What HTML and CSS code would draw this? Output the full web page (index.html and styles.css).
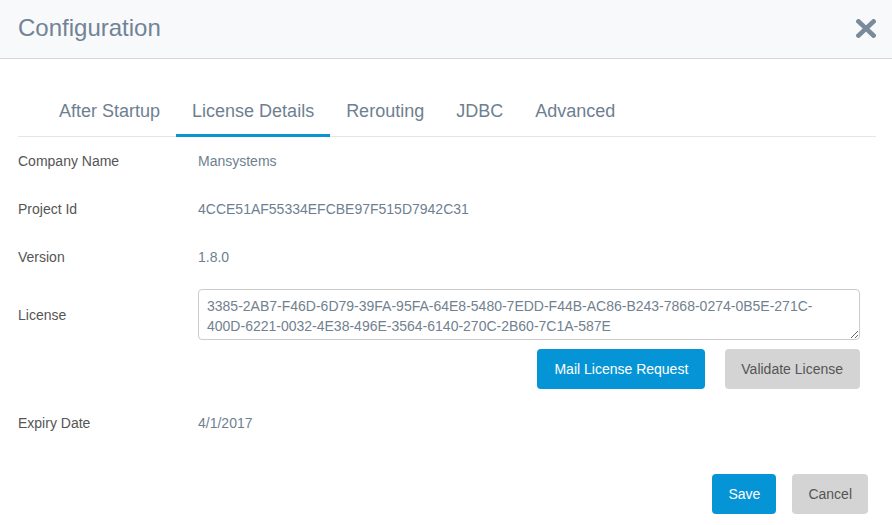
FILE: index.html
```
<!DOCTYPE html>
<html>
<head>
<meta charset="utf-8">
<link rel="stylesheet" href="styles.css">
</head>
<body>
<div class="modal">
  <header class="modal-header">
    <h1 class="title">Configuration</h1>
    <button class="close" aria-label="Close">
      <svg width="20" height="19" viewBox="0 0 20 19"><path d="M2.5 2.5 L17.5 16.5 M17.5 2.5 L2.5 16.5" stroke="#7b8a9b" stroke-width="4.6" stroke-linecap="square" fill="none"/></svg>
    </button>
  </header>
  <div class="modal-body">
    <ul class="tabs">
      <li><a class="tab">After Startup</a></li>
      <li><a class="tab active">License Details</a></li>
      <li><a class="tab">Rerouting</a></li>
      <li><a class="tab">JDBC</a></li>
      <li><a class="tab">Advanced</a></li>
    </ul>
    <div class="form">
      <div class="row">
        <div class="label">Company Name</div>
        <div class="value">Mansystems</div>
      </div>
      <div class="row">
        <div class="label">Project Id</div>
        <div class="value">4CCE51AF55334EFCBE97F515D7942C31</div>
      </div>
      <div class="row">
        <div class="label">Version</div>
        <div class="value">1.8.0</div>
      </div>
      <div class="row license-row">
        <div class="label license-label">License</div>
        <div class="field">
          <textarea class="license-text">3385-2AB7-F46D-6D79-39FA-95FA-64E8-5480-7EDD-F44B-AC86-B243-7868-0274-0B5E-271C-
400D-6221-0032-4E38-496E-3564-6140-270C-2B60-7C1A-587E</textarea>
          <div class="actions">
            <button class="btn btn-primary btn-mail">Mail License Request</button>
            <button class="btn btn-default btn-validate">Validate License</button>
          </div>
        </div>
      </div>
      <div class="row">
        <div class="label">Expiry Date</div>
        <div class="value">4/1/2017</div>
      </div>
    </div>
  </div>
  <footer class="modal-footer">
    <button class="btn btn-primary">Save</button>
    <button class="btn btn-default">Cancel</button>
  </footer>
</div>
</body>
</html>
```
FILE: styles.css
```
* { box-sizing: border-box; }
html, body {
  margin: 0;
  padding: 0;
  background: #ffffff;
  font-family: "Liberation Sans", Arial, sans-serif;
}
.modal {
  width: 892px;
  height: 525px;
  overflow: hidden;
  background: #ffffff;
}
.modal-header {
  height: 59px;
  background: #f8f9fb;
  border-bottom: 1px solid #d5d7db;
  display: flex;
  align-items: center;
  justify-content: space-between;
  padding: 0 16px 2px 18px;
}
.title {
  margin: 0;
  font-size: 24px;
  font-weight: normal;
  line-height: 28px;
  color: #728396;
}
.close {
  border: none;
  background: none;
  padding: 0;
  margin: 1px 0 0 0;
  width: 20px;
  height: 19px;
  display: flex;
}
.modal-body {
  padding: 0 16px 0 18px;
}
.tabs {
  list-style: none;
  margin: 27px 0 0 0;
  padding: 0 0 0 25px;
  display: flex;
  border-bottom: 1px solid #e6e6e6;
}
.tab {
  display: block;
  padding: 15px 16px 13px 16px;
  font-size: 18px;
  line-height: 20px;
  color: #6e7f91;
  border-bottom: 3px solid transparent;
  margin-bottom: -1px;
}
.tab.active {
  border-bottom-color: #0595d6;
}
.row {
  display: flex;
  align-items: center;
  height: 48px;
  font-size: 14px;
  line-height: 20px;
}
.label {
  width: 180px;
  flex: none;
  color: #555555;
}
.value {
  color: #6e7f91;
}
.license-row {
  height: auto;
  align-items: flex-start;
  padding: 8px 0 10px 0;
}
.license-label {
  margin-top: 16px;
}
.field {
  flex: 1;
  padding-right: 16px;
}
.license-text {
  display: block;
  width: 100%;
  height: 51px;
  margin: 0;
  padding: 6px 8px;
  border: 1px solid #cccccc;
  border-radius: 4px;
  font-family: "Liberation Sans", Arial, sans-serif;
  font-size: 14px;
  line-height: 20px;
  color: #72818f;
  resize: vertical;
  overflow: hidden;
}
.actions {
  display: flex;
  justify-content: flex-end;
  gap: 20px;
  margin-top: 9px;
}
.btn {
  height: 40px;
  padding: 0 16px;
  border: none;
  border-radius: 4px;
  font-family: "Liberation Sans", Arial, sans-serif;
  font-size: 14px;
  line-height: 20px;
}
.btn-primary {
  background: #0595d6;
  color: #ffffff;
}
.btn-default {
  background: #d4d4d4;
  color: #555555;
}
.btn-mail {
  padding: 0 17px;
}
.btn-validate {
  padding: 0 17px 0 16px;
}
.modal-footer {
  display: flex;
  justify-content: flex-end;
  gap: 16px;
  margin-top: 27px;
  padding-right: 24px;
}
```
